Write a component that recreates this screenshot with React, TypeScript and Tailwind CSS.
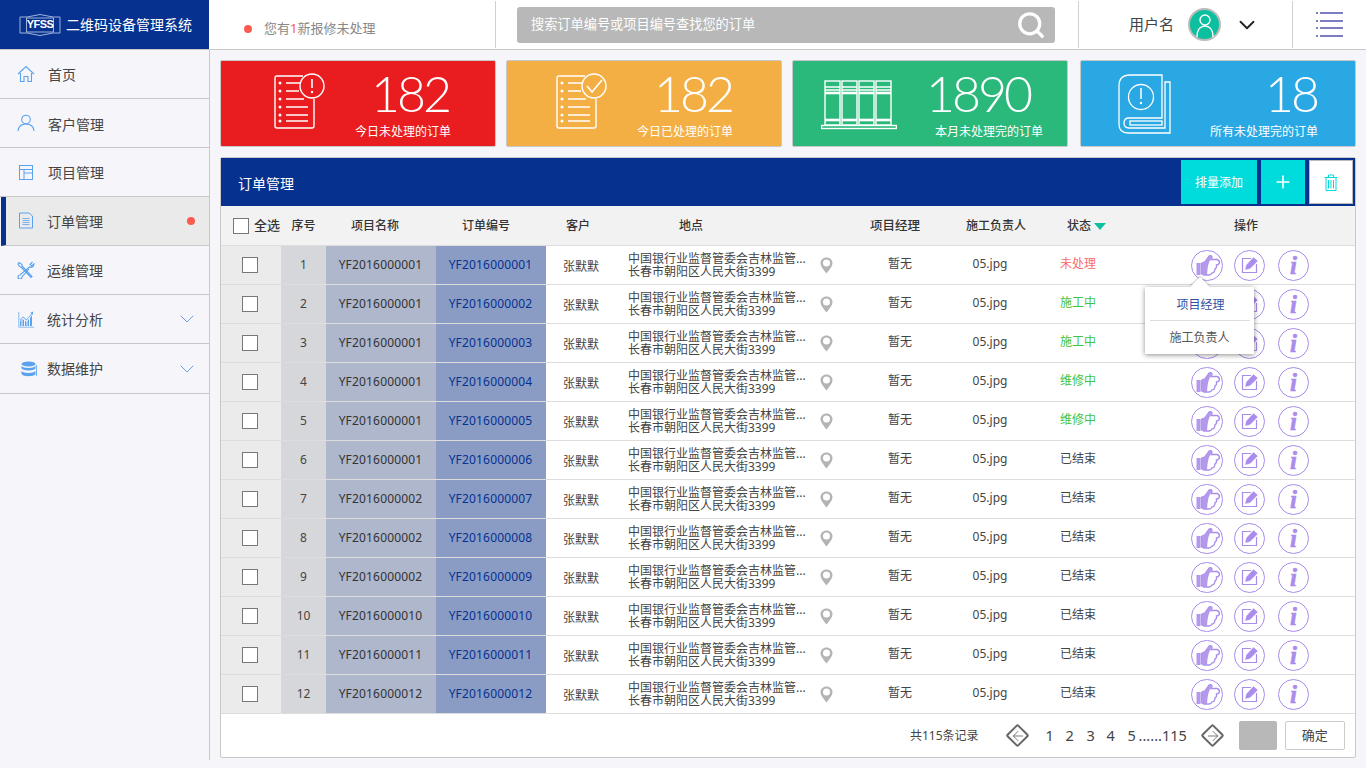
import React from 'react';
import { ChevronDown, Plus, Search, ArrowLeft, ArrowRight } from 'lucide-react';

const font = "font-['Noto_Sans','Noto_Sans_CJK_SC',sans-serif]";

const statuses: [string, string][] = [
  ['未处理', 'text-[#fa6a6a]'],
  ['施工中', 'text-[#3fc43f]'],
  ['施工中', 'text-[#3fc43f]'],
  ['维修中', 'text-[#3fc43f]'],
  ['维修中', 'text-[#3fc43f]'],
  ['已结束', 'text-[#444]'],
  ['已结束', 'text-[#444]'],
  ['已结束', 'text-[#444]'],
  ['已结束', 'text-[#444]'],
  ['已结束', 'text-[#444]'],
  ['已结束', 'text-[#444]'],
  ['已结束', 'text-[#444]'],
];

const projectNos = [
  'YF2016000001', 'YF2016000001', 'YF2016000001', 'YF2016000001', 'YF2016000001', 'YF2016000001',
  'YF2016000002', 'YF2016000002', 'YF2016000002', 'YF2016000010', 'YF2016000011', 'YF2016000012',
];

const orderNos = [
  'YF2016000001', 'YF2016000002', 'YF2016000003', 'YF2016000004', 'YF2016000005', 'YF2016000006',
  'YF2016000007', 'YF2016000008', 'YF2016000009', 'YF2016000010', 'YF2016000011', 'YF2016000012',
];

const IconHome = () => (
  <svg width="18" height="18" viewBox="0 0 18 18" fill="none" stroke="#5aa2ee" strokeWidth="1.1">
    <path d="M1 9 L9 1.5 L17 9" />
    <path d="M3.5 8 V16.5 H7 V11.5 H11 V16.5 H14.5 V8" />
  </svg>
);
const IconUser = () => (
  <svg width="18" height="18" viewBox="0 0 18 18" fill="none" stroke="#5aa2ee" strokeWidth="1.1">
    <circle cx="9" cy="5.5" r="4.3" />
    <path d="M1 17 C1.5 12 5 10 9 10 C13 10 16.5 12 17 17" />
  </svg>
);
const IconLayout = () => (
  <svg width="16" height="16" viewBox="0 0 16 16" fill="none" stroke="#5aa2ee" strokeWidth="1">
    <rect x="1.5" y="1.5" width="13" height="14" />
    <path d="M1.5 5.5 H14.5 M6 5.5 V15.5 M6 9 H14.5" />
  </svg>
);
const IconDoc = () => (
  <svg width="16" height="18" viewBox="0 0 16 18" fill="none" stroke="#5aa2ee" strokeWidth="1">
    <path d="M1.5 1 H11 L14.5 4 V16 H1.5 Z" />
    <path d="M4.5 6.5 H11.5 M4.5 8.5 H11.5 M4.5 10.5 H11.5 M4.5 12.5 H11.5" strokeWidth="0.8" />
  </svg>
);
const IconTools = () => (
  <svg width="18" height="18" viewBox="0 0 18 18" fill="none" stroke="#5aa2ee" strokeWidth="1.1">
    <path d="M2 1.5 L5 3.5 L5 5 L15 15.5 L14 16.5 L4 6 L2.5 5.5 L1 3 Z" />
    <path d="M15.5 1 L13 3.5 L14.5 5 L17 3 C17 6 14.5 7 12.5 6 L3 14 A2 2 0 1 0 5 16 L12 8" />
  </svg>
);
const IconChart = () => (
  <svg width="16" height="17" viewBox="0 0 16 17" fill="#5aa2ee">
    <path d="M0.5 1 V16.5 H16 V15.8 H1.2 V1 Z" />
    <path d="M2 15 V10.5 L3.5 8.5 V15 Z M4.5 15 V8 L6 9 V15 Z M7 15 V9.5 L8.5 11 V15 Z M9.5 15 V10 L11 8 V15 Z M12 15 V7 L14 4 V15 Z" />
    <path d="M2 8.5 L5 5.5 L8.5 8.5 L13.5 2.5 L12 2 L15 0.5 L15 4 L14 3 L8.5 9.5 L5 6.5 L2 9.5 Z" />
  </svg>
);
const IconDb = () => (
  <svg width="16" height="16" viewBox="0 0 16 16" fill="#5aa2ee" className="shrink-0 ml-[5px]">
    <ellipse cx="7.5" cy="3" rx="7" ry="2.6" />
    <path d="M0.5 5 C2 7.5 13 7.5 14.5 5 V7.5 C13 10 2 10 0.5 7.5 Z" />
    <path d="M0.5 10 C2 12.5 13 12.5 14.5 10 V13 C13 16 2 16 0.5 13 Z" />
    <rect x="15.2" y="4" width="0.8" height="11" />
  </svg>
);

const navItems = [
  { label: '首页', icon: <IconHome />, h: 'h-[49px]', text: 'ml-[13px]' },
  { label: '客户管理', icon: <IconUser />, h: 'h-[49px]', text: 'ml-[13px] pt-[2px]' },
  { label: '项目管理', icon: <IconLayout />, h: 'h-[49px]', text: 'ml-[13px]' },
  { label: '订单管理', icon: <IconDoc />, h: 'h-[49px]', text: 'ml-[12px]', active: true },
  { label: '运维管理', icon: <IconTools />, h: 'h-[49px]', text: 'ml-[12px]' },
  { label: '统计分析', icon: <IconChart />, h: 'h-[49px]', text: 'ml-[12px]', more: true },
  { label: '数据维护', icon: <IconDb />, h: 'h-[50px]', text: 'ml-[12px]', more: true },
];

const ListIcon = ({ badge }: { badge: 'alert' | 'check' }) => (
  <svg width="52" height="56" viewBox="0 0 52 56" fill="none" stroke="#fff" strokeWidth="1.4">
    <path d="M29 3 H3 Q1 3 1 5 V53 Q1 55 3 55 H38 Q40 55 40 53 V26" />
    {[10, 18, 26, 34, 42, 48].map((y) => (
      <circle key={y} cx="6" cy={y} r="1.5" fill="#fff" stroke="none" />
    ))}
    <path d="M12 10 H26 M12 18 H25 M12 26 H30 M12 34 H34 M12 42 H34 M12 48 H34" />
    <circle cx="38" cy="13" r="12" />
    {badge === 'alert' ? (
      <>
        <path d="M38 6 V15" strokeWidth="1.6" />
        <circle cx="38" cy="19" r="1.2" fill="#fff" stroke="none" />
      </>
    ) : (
      <path d="M31 13 L36 19 L46 7" strokeWidth="1.6" />
    )}
  </svg>
);

const ShelfIcon = () => (
  <svg width="76" height="50" viewBox="0 0 76 50" fill="none" stroke="#fff" strokeWidth="1.4">
    {[4, 21, 38, 55].map((x) => (
      <g key={x}>
        <rect x={x} y="1" width="15" height="44" />
        <path d={`M${x} 7 H${x + 15} M${x} 10 H${x + 15}`} />
        <path d={`M${x} 13 H${x + 15}`} strokeWidth="2.6" />
        <path d={`M${x} 40 H${x + 15}`} strokeWidth="2.6" />
      </g>
    ))}
    <rect x="0.5" y="45.5" width="75" height="3" />
  </svg>
);

const BookIcon = () => (
  <svg width="54" height="60" viewBox="0 0 54 60" fill="none" stroke="#fff" strokeWidth="1.3">
    <path d="M44 1 H12 Q1 1 1 12 V50 Q1 59 10 59 H52 V8 H47 V54 H11 Q6 54 6 49 Q6 44 11 44 H44 Z" />
    <rect x="12" y="47" width="32" height="4" />
    <circle cx="23" cy="23" r="12.5" />
    <path d="M23 14 V25" strokeWidth="1.5" />
    <circle cx="23" cy="29" r="1.2" fill="#fff" stroke="none" />
  </svg>
);

const cards = [
  { bg: 'bg-[#e91c1f]', w: 'w-[276px]', num: '182', label: '今日未处理的订单', icon: <ListIcon badge="alert" />, iconBox: 'left-[53px] top-[12px]', numPos: 'right-[46px]', labelPos: 'right-[44px]' },
  { bg: 'bg-[#f3af44]', w: 'w-[276px]', num: '182', label: '今日已处理的订单', icon: <ListIcon badge="check" />, iconBox: 'left-[49px] top-[12px]', numPos: 'right-[49px]', labelPos: 'right-[48px]' },
  { bg: 'bg-[#2bb87b]', w: 'w-[276px]', num: '1890', label: '本月未处理完的订单', icon: <ShelfIcon />, iconBox: 'left-[28px] top-[19px]', numPos: 'right-[37px]', labelPos: 'right-[24px]' },
  { bg: 'bg-[#2aa8e4]', w: 'w-[276px]', num: '18', label: '所有未处理完的订单', icon: <BookIcon />, iconBox: 'left-[37px] top-[13px]', numPos: 'right-[38px]', labelPos: 'right-[37px]' },
];

const ROW = 'flex items-stretch';
const COL = {
  check: 'w-[60px] shrink-0 flex items-center justify-center',
  seq: 'w-[45px] shrink-0 flex items-center justify-center',
  name: 'w-[110px] shrink-0 flex items-center justify-center',
  client: 'w-[70px] shrink-0 flex items-center justify-center',
};

const CheckBox = () => <span className="block w-[16px] h-[16px] bg-white border border-[#777]" />;

const HandButton = () => (
  <span className="w-[32px] h-[31px] rounded-full border border-[#a98ceb] flex items-center justify-center">
    <svg width="24" height="21" viewBox="0 0 24 21" className="ml-[1px]">
      <path d="M0.5 8 L4.5 8 V20 H0.5 Z" fill="#b398ec" />
      <path d="M5.5 8.5 L9 7 L13 1.2 Q15 0 16 2 L15 4.5 H21 Q24 5.5 23.2 8.5 Q22 10 20.5 10 Q21 13 19 14 Q18.5 18 16 18 Q15 20 13 20 H8 L5.5 18.5 Z" fill="#fff" stroke="#a98ceb" strokeWidth="1.4" />
      <path d="M5.5 8.5 L9 7 L13 1.2 Q15 0 15.5 2 L14 5 L12.5 9 L11.5 14 L11 20 H8 L5.5 18.5 Z" fill="#b398ec" />
    </svg>
  </span>
);

const EditButton = () => (
  <span className="w-[31px] h-[31px] rounded-full border border-[#a98ceb] flex items-center justify-center">
    <svg width="18" height="18" viewBox="0 0 18 18" fill="none" stroke="#a98ceb">
      <path d="M10 2.5 H1.5 V16.5 H15.5 V8" strokeWidth="1.2" />
      <path d="M4.5 13.5 L5.5 9 L12.5 1.5 L16.5 5 L9 12.5 Z" fill="#a98ceb" strokeWidth="0.4" />
    </svg>
  </span>
);

const InfoButton = () => (
  <span className="w-[31px] h-[31px] rounded-full border border-[#a98ceb] flex items-center justify-center font-['Liberation_Serif',serif] italic font-bold text-[25px] leading-none text-[#a98ceb] [-webkit-text-stroke:0.6px_#a98ceb]">
    i
  </span>
);

const Pager = ({ dir }: { dir: 'prev' | 'next' }) => (
  <span className="relative w-[24px] h-[24px] flex items-center justify-center">
    <span className="absolute w-[17px] h-[17px] rotate-45 rounded-[2px] border-2 border-[#666]" />
    {dir === 'prev' ? (
      <ArrowLeft className="relative text-[#666]" size={16} strokeWidth={1.3} />
    ) : (
      <ArrowRight className="relative text-[#666]" size={16} strokeWidth={1.3} />
    )}
  </span>
);

export default function App() {
  return (
    <div className={`${font} w-[1366px] h-[768px] overflow-hidden bg-[#f6f6fa] text-[#333]`}>
      {/* Header */}
      <div className="h-[50px] bg-white border-b border-[#c8c8c8] flex">
        <div className="w-[209px] shrink-0 bg-[#06318f] flex items-center pl-[19px] text-white">
          <span className="relative w-[42px] h-[22px] flex items-center justify-center">
            <svg className="absolute inset-0" width="42" height="22" viewBox="0 0 42 22" fill="none" stroke="#c7d3ee" strokeWidth="0.8">
              <path d="M8 3 L21 0.5 L34 3 L41 3 V19 H34 L21 21.5 L8 19 H1 V3 Z" />
              <path d="M7.5 4 H34.5 V18 H7.5 Z" />
            </svg>
            <span className="relative text-white text-[11px] leading-[13px] font-bold tracking-[-0.6px] font-['Liberation_Sans',sans-serif]">YFSS</span>
          </span>
          <span className="ml-[5px] text-[14px] whitespace-nowrap">二维码设备管理系统</span>
        </div>
        <div className="w-[287px] shrink-0 my-[1px] border-r border-[#d0d0d0] flex items-center pl-[35px] pt-[8px]">
          <span className="w-[8px] h-[8px] rounded-full bg-[#fb5a50]" />
          <span className="ml-[12px] text-[13px] text-[#888] whitespace-nowrap">
            您有<span className="text-[#fb5a50]">1</span>新报修未处理
          </span>
        </div>
        <div className="w-[583px] shrink-0 my-[1px] border-r border-[#d0d0d0] flex items-center pl-[21px]">
          <div className="w-[538px] h-[36px] rounded-[3px] bg-[#b8b8b8] flex items-center justify-between pl-[14px] pr-[9px]">
            <span className="text-[13.2px] text-white">搜索订单编号或项目编号查找您的订单</span>
            <Search className="text-white" size={30} strokeWidth={2.6} />
          </div>
        </div>
        <div className="w-[214px] shrink-0 my-[1px] border-r border-[#d0d0d0] flex items-center pl-[50px]">
          <span className="text-[15px] text-[#444] whitespace-nowrap">用户名</span>
          <span className="ml-[14px] w-[33px] h-[33px] rounded-full bg-[#0cbf9f] border-2 border-[#bbb] flex items-center justify-center">
            <svg width="20" height="26" viewBox="0 0 20 26" fill="none" stroke="#fff" strokeWidth="1.4">
              <circle cx="10" cy="8" r="5" />
              <path d="M2 25 C2 17 6 14 10 14 C14 14 18 17 18 25" />
            </svg>
          </span>
          <ChevronDown className="ml-[13px] text-[#222]" size={26} strokeWidth={1.7} />
        </div>
        <div className="flex-1 flex flex-col items-center justify-center gap-[5.4px]">
          {[0, 1, 2, 3].map((i) => (
            <span key={i} className="flex gap-[2px] items-center">
              <span className="w-[2px] h-[2px] bg-[#7c7cc0]" />
              <span className="w-[23px] h-[2px] bg-[#7c7cc0]" />
            </span>
          ))}
        </div>
      </div>

      <div className="flex h-[718px]">
        {/* Sidebar */}
        <div className="w-[210px] h-[710px] shrink-0 border-r border-[#c8c8c8]">
          {navItems.map((item) => (
            <div
              key={item.label}
              className={`${item.h} border-b border-[#c8c8c8] flex items-center ${item.active ? 'bg-[#eaeaea] ml-[1px] border-l-[5px] border-l-[#06318f] pl-[11px]' : 'pl-[17px]'}`}
            >
              <span className="w-[18px] flex justify-center">{item.icon}</span>
              <span className={`${item.text} text-[14px] text-[#444] flex-1`}>{item.label}</span>
              {item.active && <span className="w-[8px] h-[8px] rounded-full bg-[#fb5a50] mr-[14px]" />}
              {item.more && <ChevronDown className="text-[#6a9fe6] mr-[10px]" size={24} strokeWidth={1} />}
            </div>
          ))}
        </div>

        {/* Main */}
        <div className="w-[1156px] pl-[10px] pt-[10px]">
          <div className="flex gap-[10px]">
            {cards.map((c, i) => (
              <div
                key={i}
                className={`relative ${c.w} ${i === 3 ? 'ml-[2px]' : ''} h-[87px] rounded-[2px] border border-[#c8c8c8] text-white ${c.bg}`}
              >
                <span className={`absolute ${c.iconBox}`}>{c.icon}</span>
                <span className={`absolute ${c.numPos} top-[0px] text-[50px] leading-[64px] font-light tracking-[-3px] font-['Lato',sans-serif]`}>{c.num}</span>
                <span className={`absolute ${c.labelPos} top-[62px] text-[12px] leading-[17px] whitespace-nowrap`}>{c.label}</span>
              </div>
            ))}
          </div>

          {/* Table panel */}
          <div className="relative mt-[10px] w-[1136px] h-[601px] bg-white border border-[#c8c8c8] rounded-[2px]">
            <div className="h-[48px] bg-[#06318f] flex items-center pl-[17px] pr-[2px] text-white">
              <span className="text-[14px] flex-1 pt-[2px]">订单管理</span>
              <span className="w-[76px] h-[44px] bg-[#00dcdc] flex items-center justify-center text-[12px] pt-[2px]">排量添加</span>
              <span className="ml-[4px] w-[44px] h-[44px] bg-[#00dcdc] flex items-center justify-center">
                <Plus size={20} strokeWidth={2} />
              </span>
              <span className="ml-[4px] w-[44px] h-[44px] bg-white border border-[#bbb] flex items-center justify-center">
                <svg width="14" height="17" viewBox="0 0 14 17" fill="none" stroke="#00dcdc" strokeWidth="1">
                  <path d="M0.5 3.5 H13.5 M4.5 3.5 V1 H9.5 V3.5" />
                  <path d="M2 3.5 V16.5 H12 V3.5" />
                  <path d="M4.5 6 V14.5 M7 6 V14.5 M9.5 6 V14.5" />
                </svg>
              </span>
            </div>

            {/* Column titles */}
            <div className={`${ROW} h-[40px] pt-[1px] bg-[#f2f2f2] border-b border-[#ddd] text-[12px] text-[#333] font-medium`}>
              <div className="w-[60px] shrink-0 flex items-center pl-[12px]">
                <CheckBox />
                <span className="ml-[5px] text-[13px] whitespace-nowrap">全选</span>
              </div>
              <div className={COL.seq}>序号</div>
              <div className={`${COL.name} pr-[12px]`}>项目名称</div>
              <div className={`${COL.name} pr-[10px]`}>订单编号</div>
              <div className={`${COL.client} pr-[6px]`}>客户</div>
              <div className="w-[240px] shrink-0 flex items-center pl-[63px]">地点</div>
              <div className="w-[88px] shrink-0 flex items-center pl-[14px] text-[12.5px] whitespace-nowrap">项目经理</div>
              <div className="w-[92px] shrink-0 flex items-center pl-[22px] whitespace-nowrap">施工负责人</div>
              <div className="w-[84px] shrink-0 flex items-center pl-[31px] whitespace-nowrap">
                状态
                <span className="ml-[3px] w-0 h-0 border-x-[6px] border-x-transparent border-t-[7px] border-t-[#0cbf9f]" />
              </div>
              <div className="flex-1 flex items-center pl-[114px]">操作</div>
            </div>

            {/* Rows */}
            {orderNos.map((no, i) => (
              <div key={no} className={`${ROW} h-[39px] border-b border-[#ddd] text-[12px] text-[#444]`}>
                <div className={`${COL.check} bg-[#ebebeb] pr-[2px]`}>
                  <CheckBox />
                </div>
                <div className={`${COL.seq} bg-[#d6d7da]`}>{i + 1}</div>
                <div className={`${COL.name} bg-[#aeb7cc] text-[#333] tracking-[0.17px] pr-[1px]`}>{projectNos[i]}</div>
                <div className={`${COL.name} bg-[#8a9cc4] text-[#06318f] tracking-[0.17px] pr-[1px]`}>{no}</div>
                <div className={`${COL.client} pt-[4px]`}>张默默</div>
                <div className="w-[240px] shrink-0 flex items-center pl-[12px]">
                  <div className="w-[192px] leading-[13px] whitespace-nowrap">
                    <div>中国银行业监督管委会吉林监管...</div>
                    <div>长春市朝阳区人民大街3399</div>
                  </div>
                  <svg width="13" height="17" viewBox="0 0 13 17" fill="#b4b4b4">
                    <path fillRule="evenodd" d="M6.5 0.5 C10 0.5 12.5 3 12.5 6 C12.5 9.5 9 13 6.5 16.5 C4 13 0.5 9.5 0.5 6 C0.5 3 3 0.5 6.5 0.5 Z M6.5 2.5 A3.5 3.5 0 1 0 6.5 9.5 A3.5 3.5 0 1 0 6.5 2.5 Z" />
                  </svg>
                </div>
                <div className="w-[88px] shrink-0 flex items-center justify-center pb-[3px]">暂无</div>
                <div className="w-[92px] shrink-0 flex items-center justify-center pb-[3px]">05.jpg</div>
                <div className={`w-[84px] shrink-0 flex items-center justify-center pb-[3px] ${statuses[i][1]}`}>{statuses[i][0]}</div>
                <div className="flex-1 flex items-center pl-[71px]">
                  <HandButton />
                  <span className="ml-[11px]"><EditButton /></span>
                  <span className="ml-[13px]"><InfoButton /></span>
                </div>
              </div>
            ))}

            {/* Footer */}
            <div className="h-[43px] flex items-center text-[#444]">
              <span className="ml-[689px] text-[12px] whitespace-nowrap">共115条记录</span>
              <span className="ml-[27px]"><Pager dir="prev" /></span>
              <span className="ml-[15px] w-[10px] text-center text-[14.5px]">1</span>
              <span className="ml-[10px] w-[10px] text-center text-[14.5px]">2</span>
              <span className="ml-[11px] w-[10px] text-center text-[14.5px]">3</span>
              <span className="ml-[10px] w-[10px] text-center text-[14.5px]">4</span>
              <span className="ml-[11px] w-[10px] text-center text-[14.5px]">5</span>
              <span className="ml-[2px] text-[14.5px]">......115</span>
              <span className="ml-[14px]"><Pager dir="next" /></span>
              <span className="ml-[14px] w-[38px] h-[29px] rounded-[2px] bg-[#b8b8b8]" />
              <span className="ml-[8px] w-[60px] h-[29px] rounded-[2px] border border-[#ccc] flex items-center justify-center text-[13px]">确定</span>
            </div>

            {/* Assign popover */}
            <div className="absolute left-[924px] top-[129px] w-[109px] h-[67px] bg-white shadow-[0_1px_5px_rgba(0,0,0,0.45)] text-[12px] flex flex-col items-center">
              <span className="absolute left-[48px] top-[-7px] w-[14px] h-[14px] rotate-45 bg-white shadow-[-1px_-1px_2px_rgba(0,0,0,0.2)]" />
              <span className="relative h-[33px] pt-[3px] pl-[2px] flex items-center text-[#2f4f9f]">项目经理</span>
              <span className="relative w-[100px] h-px bg-[#ddd]" />
              <span className="h-[33px] flex items-center text-[#555]">施工负责人</span>
            </div>
          </div>
        </div>
      </div>
    </div>
  );
}
